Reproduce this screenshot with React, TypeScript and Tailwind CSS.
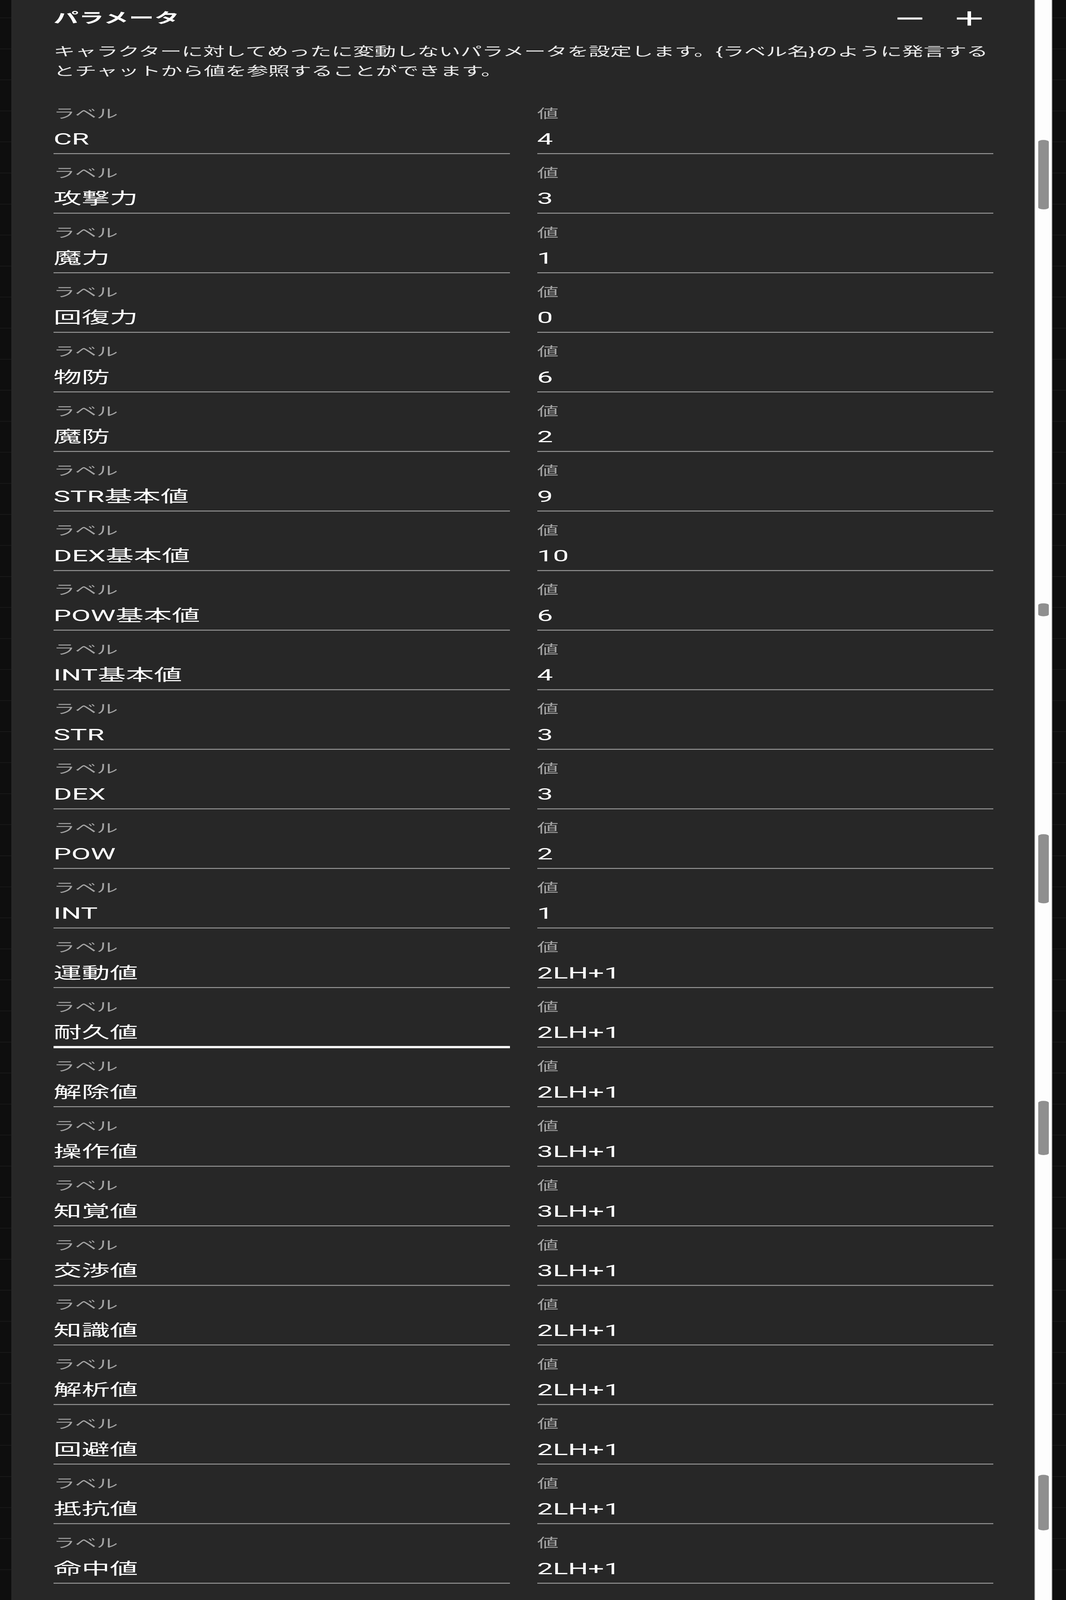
import React, { useEffect, useState } from "react";

const params: { label: string; value: string }[] = [
  { label: "CR", value: "4" },
  { label: "攻撃力", value: "3" },
  { label: "魔力", value: "1" },
  { label: "回復力", value: "0" },
  { label: "物防", value: "6" },
  { label: "魔防", value: "2" },
  { label: "STR基本値", value: "9" },
  { label: "DEX基本値", value: "10" },
  { label: "POW基本値", value: "6" },
  { label: "INT基本値", value: "4" },
  { label: "STR", value: "3" },
  { label: "DEX", value: "3" },
  { label: "POW", value: "2" },
  { label: "INT", value: "1" },
  { label: "運動値", value: "2LH+1" },
  { label: "耐久値", value: "2LH+1" },
  { label: "解除値", value: "2LH+1" },
  { label: "操作値", value: "3LH+1" },
  { label: "知覚値", value: "3LH+1" },
  { label: "交渉値", value: "3LH+1" },
  { label: "知識値", value: "2LH+1" },
  { label: "解析値", value: "2LH+1" },
  { label: "回避値", value: "2LH+1" },
  { label: "抵抗値", value: "2LH+1" },
  { label: "命中値", value: "2LH+1" },
];

// scroll thumbs as they show up in the stitched capture
const thumbs = [
  { top: 625, height: 310 },
  { top: 2694, height: 58 },
  { top: 3725, height: 309 },
  { top: 4916, height: 242 },
  { top: 6586, height: 248 },
];

const PAGE_H = 7145;
const font = { fontFamily: "Roboto, 'Noto Sans CJK JP', sans-serif" };

// the window may be shorter than the full sheet; squeeze vertically so all rows stay in view
const fitScale = () => (typeof window === "undefined" ? 1 : Math.min(1, window.innerHeight / PAGE_H));

function Field({ caption, value, focused }: { caption: string; value: string; focused?: boolean }) {
  return (
    <div className="flex flex-col pt-[55px]">
      <div className="h-[60px] text-[55px] leading-[60px] text-[#a2a2a2] whitespace-nowrap">{caption}</div>
      <div className="mt-[44px] h-[80px] text-[72px] leading-[80px] text-white whitespace-nowrap">{value}</div>
      {focused ? (
        <div className="mt-[20px] -mb-[3px] h-[10px] bg-white" />
      ) : (
        <div className="mt-[23px] h-[4px] bg-[#9d9d9d]" />
      )}
    </div>
  );
}

function GridStrip({ width }: { width: string }) {
  return (
    <div className={`${width} shrink-0 bg-[#0e0e0e] flex flex-col overflow-hidden`}>
      <div className="h-[81px] shrink-0 border-b-[3px] border-[#1b1b1b]" />
      {Array.from({ length: 50 }).map((_, i) => (
        <div key={i} className="h-[138.6px] shrink-0 border-b-[3px] border-[#1b1b1b]" />
      ))}
    </div>
  );
}

export default function App() {
  const [sy, setSy] = useState(fitScale);

  useEffect(() => {
    const onResize = () => setSy(fitScale());
    window.addEventListener("resize", onResize);
    return () => window.removeEventListener("resize", onResize);
  }, []);

  return (
    <div className="h-screen w-full overflow-hidden bg-[#0e0e0e]">
      <div
        className="flex w-[2728px] h-[7145px] origin-top-left overflow-hidden"
        style={{ ...font, transform: `scaleY(${sy})` }}
      >
        <GridStrip width="w-[29px]" />

        <main className="w-[2618px] shrink-0 bg-[#272727] pl-[108px] pr-[105px] pt-[27px]">
          {/* Header */}
          <div className="h-[110px] flex items-center justify-between">
            <h1 className="text-[64px] font-bold leading-none text-white tracking-[1px]">パラメータ</h1>
            <div className="flex items-center gap-[43px] mr-[7px]">
              <button aria-label="remove" className="w-[109px] h-[109px] flex items-center justify-center">
                <svg viewBox="0 0 24 24" className="w-[109px] h-[109px]" fill="#ffffff">
                  <path d="M19,13H5V11H19V13Z" />
                </svg>
              </button>
              <button aria-label="add" className="w-[109px] h-[109px] flex items-center justify-center">
                <svg viewBox="0 0 24 24" className="w-[109px] h-[109px]" fill="#ffffff">
                  <path d="M19,13H13V19H11V13H5V11H11V5H13V11H19V13Z" />
                </svg>
              </button>
            </div>
          </div>

          {/* Description */}
          <p className="mt-[50px] text-[55px] leading-[87px] text-[#ececec]">
            <span className="block whitespace-nowrap">
              キャラクターに対してめったに変動しないパラメータを設定します。{"{"}ラベル名{"}"}のように発言する
            </span>
            <span className="block whitespace-nowrap">とチャットから値を参照することができます。</span>
          </p>

          {/* Parameter rows */}
          <div className="mt-[61px] flex flex-col">
            {params.map((p, i) => (
              <div key={i} className="grid grid-cols-2 gap-x-[70px]">
                <Field caption="ラベル" value={p.label} focused={p.label === "耐久値"} />
                <Field caption="値" value={p.value} />
              </div>
            ))}
          </div>
        </main>

        {/* Scrollbar */}
        <div className="relative w-[46px] shrink-0 bg-[#fdfdfd] border-x-[2px] border-[#a4a4a4]">
          {thumbs.map((t, i) => (
            <div
              key={i}
              className="absolute left-[8px] w-[27px] bg-[#8f8f8f] rounded-[14px/9px]"
              style={{ top: t.top, height: t.height }}
            />
          ))}
        </div>

        <GridStrip width="w-[35px]" />
      </div>
    </div>
  );
}
